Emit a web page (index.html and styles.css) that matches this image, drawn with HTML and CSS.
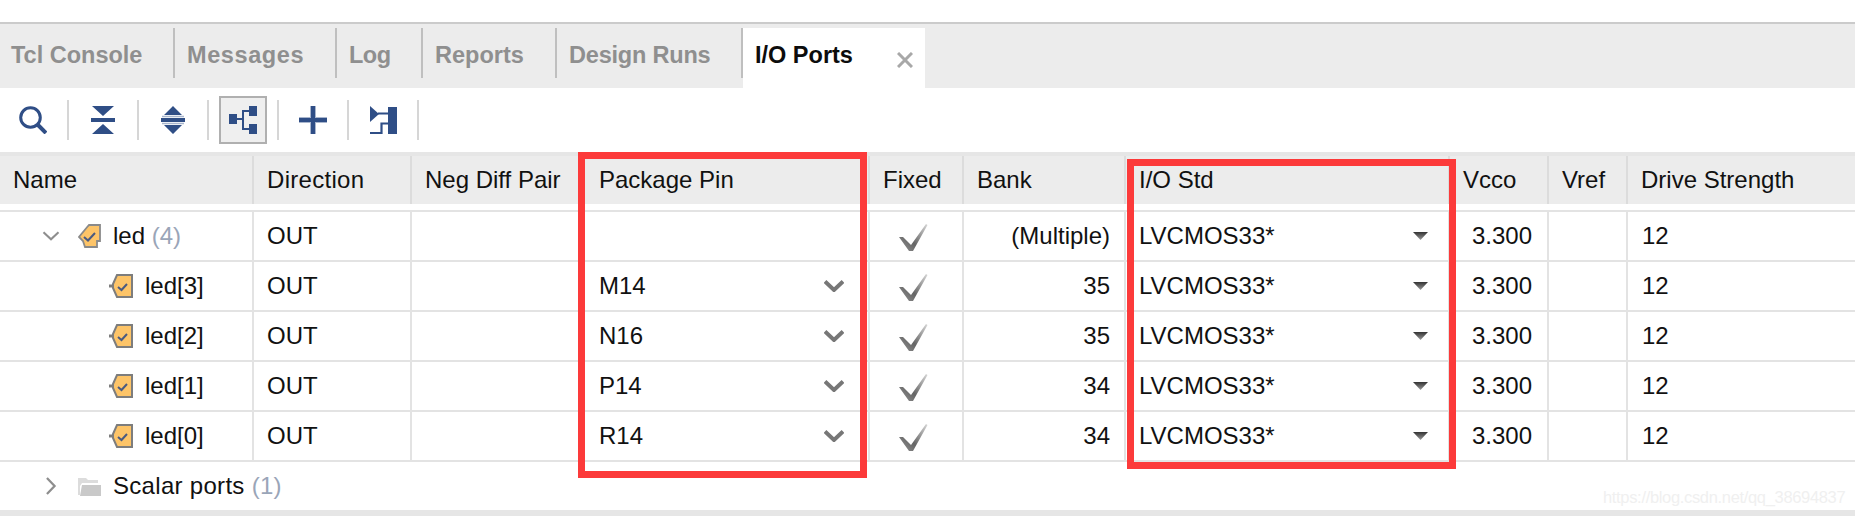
FILE: index.html
```html
<!DOCTYPE html>
<html lang="en">
<head>
<meta charset="utf-8">
<title>I/O Ports</title>
<link rel="stylesheet" href="styles.css">
</head>
<body>
<svg class="defs" width="0" height="0" aria-hidden="true">
  <defs>
    <linearGradient id="tickfill" x1="0" y1="1" x2="1" y2="0">
      <stop offset="0" stop-color="#969696"/>
      <stop offset="0.4" stop-color="#666"/>
      <stop offset="1" stop-color="#d8d8d8"/>
    </linearGradient>
    <linearGradient id="trifill" x1="0" y1="0" x2="0" y2="1">
      <stop offset="0" stop-color="#333"/>
      <stop offset="1" stop-color="#999"/>
    </linearGradient>
  </defs>
  <symbol id="port" viewBox="0 0 24 24">
    <path d="M8 1H23V23H8L4 14V10Z" fill="#fdc468" stroke="#7d7d7d" stroke-width="2"/>
    <path d="M0 10.500H4V13.500H0Z" fill="#7d7d7d"/>
    <path d="M9 13L12.500 16L18 10" fill="none" stroke="#4a5a80" stroke-width="2"/>
  </symbol>
  <symbol id="chev" viewBox="0 0 20 12">
    <path d="M1 1.500L10 10L19 1.500" fill="none" stroke="#777" stroke-width="4"/>
  </symbol>
  <symbol id="tri" viewBox="0 0 15 8">
    <path d="M0 0H15L7.500 8Z" fill="url(#trifill)"/>
  </symbol>
  <symbol id="tick" viewBox="0 0 29 27">
    <path d="M0 13L4 13L12 21L27 0L28.500 1L14 27H10Z" fill="url(#tickfill)"/>
  </symbol>
</svg>

<div class="tabs">
  <div class="tab tab-a">Tcl Console</div>
  <div class="tab tab-b">Messages</div>
  <div class="tab tab-c">Log</div>
  <div class="tab tab-d">Reports</div>
  <div class="tab tab-e">Design Runs</div>
  <div class="tab tab-active">I/O Ports
    <svg class="close" viewBox="0 0 16 16"><path d="M1 1L15 15M15 1L1 15" stroke="#a8a8a8" stroke-width="3"/></svg>
  </div>
</div>

<div class="toolbar">
  <div class="tool"><svg class="ticon" viewBox="0 0 28 28"><circle cx="11.500" cy="11.500" r="9.800" fill="none" stroke="#2f4e86" stroke-width="3"/><path d="M19 19L27 27" stroke="#2f4e86" stroke-width="4"/></svg></div>
  <div class="sep"></div>
  <div class="tool"><svg class="ticon" viewBox="0 0 28 28"><path d="M1 0H23L12 10Z M0 12H24V16H0Z M12 18L23 28H1Z" fill="#2f4e86" transform="translate(2 0)"/></svg></div>
  <div class="sep"></div>
  <div class="tool"><svg class="ticon" viewBox="0 0 28 28"><path d="M14 0L23 9H5Z M14 28L5 19H23Z M2 12H26V16H2Z" fill="#2f4e86"/><path d="M3 10.500H25M3 17.500H25" stroke="#a9b6cd" stroke-width="1.500"/></svg></div>
  <div class="sep"></div>
  <div class="tool"><div class="tool-on"><svg class="ticon" viewBox="0 0 28 28"><path d="M0 8H8V18H0Z M20 0H28V10H20Z M20 18H28V28H20Z" fill="#2f4e86"/><path d="M8 13H14M20 5H14V23H20" fill="none" stroke="#2f4e86" stroke-width="2"/></svg></div></div>
  <div class="sep"></div>
  <div class="tool"><svg class="ticon" viewBox="0 0 28 28"><path d="M11 0H17V28H11Z M0 11H28V17H0Z" fill="#a9b6cd"/><path d="M12 0H16V28H12Z M0 12H28V16H0Z" fill="#2f4e86"/></svg></div>
  <div class="sep"></div>
  <div class="tool"><svg class="ticon" viewBox="0 0 28 28"><path d="M1 0L10 8L1 16Z M19 1H28V28H19Z" fill="#2f4e86"/><path d="M9 7.500H20M20 17.500H12.500V27H1" fill="none" stroke="#2f4e86" stroke-width="2.200"/></svg></div>
  <div class="sep"></div>
</div>

<div class="grid-wrap">
  <div class="row head">
    <div class="cell">Name</div>
    <div class="cell c-dir-h">Direction</div>
    <div class="cell">Neg Diff Pair</div>
    <div class="cell c-pin">Package Pin</div>
    <div class="cell c-fixed-h">Fixed</div>
    <div class="cell">Bank</div>
    <div class="cell c-std-h">I/O Std</div>
    <div class="cell">Vcco</div>
    <div class="cell">Vref</div>
    <div class="cell c-last">Drive Strength</div>
  </div>
  <div class="head-gap"></div>

  <div class="row">
    <div class="cell c-tree">
      <svg class="tw tw-open" viewBox="0 0 20 12"><path d="M1 1.500L10 10L19 1.500" fill="none" stroke="#8e8e8e" stroke-width="2.500"/></svg>
      <svg class="bus" viewBox="0 0 24 24"><path d="M11 1H22V17H19V23H7L5 17L1 13L10 2Z" fill="#fdc468" stroke="#8a8a8a" stroke-width="1.800"/><path d="M6 13L10 16.500L17 9" fill="none" stroke="#4a5a80" stroke-width="2"/></svg>
      <span>led <span class="count">(4)</span></span>
    </div>
    <div class="cell">OUT</div>
    <div class="cell"></div>
    <div class="cell c-pin"></div>
    <div class="cell c-fixed"><svg class="tick"><use href="#tick"/></svg></div>
    <div class="cell c-bank">(Multiple)</div>
    <div class="cell c-std"><span>LVCMOS33*</span><svg class="tri"><use href="#tri"/></svg></div>
    <div class="cell c-vcco">3.300</div>
    <div class="cell"></div>
    <div class="cell c-last">12</div>
  </div>

  <div class="row">
    <div class="cell c-leaf"><svg class="port"><use href="#port"/></svg><span>led[3]</span></div>
    <div class="cell">OUT</div>
    <div class="cell"></div>
    <div class="cell c-pin"><span>M14</span><svg class="chev"><use href="#chev"/></svg></div>
    <div class="cell c-fixed"><svg class="tick"><use href="#tick"/></svg></div>
    <div class="cell c-bank">35</div>
    <div class="cell c-std"><span>LVCMOS33*</span><svg class="tri"><use href="#tri"/></svg></div>
    <div class="cell c-vcco">3.300</div>
    <div class="cell"></div>
    <div class="cell c-last">12</div>
  </div>

  <div class="row">
    <div class="cell c-leaf"><svg class="port"><use href="#port"/></svg><span>led[2]</span></div>
    <div class="cell">OUT</div>
    <div class="cell"></div>
    <div class="cell c-pin"><span>N16</span><svg class="chev"><use href="#chev"/></svg></div>
    <div class="cell c-fixed"><svg class="tick"><use href="#tick"/></svg></div>
    <div class="cell c-bank">35</div>
    <div class="cell c-std"><span>LVCMOS33*</span><svg class="tri"><use href="#tri"/></svg></div>
    <div class="cell c-vcco">3.300</div>
    <div class="cell"></div>
    <div class="cell c-last">12</div>
  </div>

  <div class="row">
    <div class="cell c-leaf"><svg class="port"><use href="#port"/></svg><span>led[1]</span></div>
    <div class="cell">OUT</div>
    <div class="cell"></div>
    <div class="cell c-pin"><span>P14</span><svg class="chev"><use href="#chev"/></svg></div>
    <div class="cell c-fixed"><svg class="tick"><use href="#tick"/></svg></div>
    <div class="cell c-bank">34</div>
    <div class="cell c-std"><span>LVCMOS33*</span><svg class="tri"><use href="#tri"/></svg></div>
    <div class="cell c-vcco">3.300</div>
    <div class="cell"></div>
    <div class="cell c-last">12</div>
  </div>

  <div class="row">
    <div class="cell c-leaf"><svg class="port"><use href="#port"/></svg><span>led[0]</span></div>
    <div class="cell">OUT</div>
    <div class="cell"></div>
    <div class="cell c-pin"><span>R14</span><svg class="chev"><use href="#chev"/></svg></div>
    <div class="cell c-fixed"><svg class="tick"><use href="#tick"/></svg></div>
    <div class="cell c-bank">34</div>
    <div class="cell c-std"><span>LVCMOS33*</span><svg class="tri"><use href="#tri"/></svg></div>
    <div class="cell c-vcco">3.300</div>
    <div class="cell"></div>
    <div class="cell c-last">12</div>
  </div>

  <div class="group">
    <svg class="tw tw-closed" viewBox="0 0 12 20"><path d="M1.500 1L10 10L1.500 19" fill="none" stroke="#8e8e8e" stroke-width="2.500"/></svg>
    <svg class="folder" viewBox="0 0 24 22"><path d="M1 3H9L11 5H21V8H5L3 11V20H1Z" fill="#dcdcdc"/><path d="M5 10H24V21H3Z" fill="#c9c9c9"/></svg>
    <span>Scalar ports <span class="count">(1)</span></span>
  </div>

  <div class="mark mark-pin"></div>
  <div class="mark mark-std"></div>
  <div class="watermark">https://blog.csdn.net/qq_38694837</div>
</div>
</body>
</html>
```

FILE: styles.css
```css
* { box-sizing: border-box; }

html, body { margin: 0; padding: 0; }

body {
  width: 1855px;
  height: 516px;
  overflow: hidden;
  background: #fff;
  color: #111;
  font-family: "Liberation Sans", Arial, sans-serif;
  font-size: 24px;
  padding-top: 22px;
}

.defs { position: absolute; }

/* Tab strip */
.tabs {
  display: flex;
  height: 66px;
  padding-top: 4px;
  background: #ececec;
  border-top: 2px solid #cbcbcb;
  font-size: 23.5px;
  font-weight: bold;
  color: #8f8f8f;
}

.tab {
  height: 50px;
  padding: 5px 0 0 12px;
  line-height: 45px;
  border-right: 2px solid #bfbfbf;
}

.tab-a { width: 175px; padding-left: 11px; }
.tab-b { width: 162px; letter-spacing: 0.6px; }
.tab-c { width: 86px; letter-spacing: -0.5px; }
.tab-d { width: 134px; }
.tab-e { width: 186px; letter-spacing: -0.2px; }

.tab-active {
  display: flex;
  width: 182px;
  height: 60px;
  border-right: 0;
  background: #fff;
  color: #0c0c0c;
  position: relative;
}

.close {
  position: absolute;
  left: 154px;
  top: 24px;
  width: 16px;
  height: 16px;
}

/* Toolbar */
.toolbar {
  display: flex;
  align-items: center;
  height: 64px;
}

.tool {
  display: flex;
  align-items: center;
  justify-content: center;
  width: 66px;
  margin-right: 1px;
}

.tool-on {
  display: flex;
  align-items: center;
  justify-content: center;
  width: 48px;
  height: 48px;
  background: #efefef;
  border: 2px solid #b0b0b0;
}

.ticon { width: 28px; height: 28px; display: block; }

.sep { width: 2px; height: 40px; margin-right: 1px; background: #d6d6d6; }

/* Table */
.grid-wrap { position: relative; }

.row {
  display: grid;
  grid-template-columns: 254px 158px 170px 288px 94px 162px 324px 99px 79px 227px;
  height: 50px;
  border-bottom: 2px solid #e3e3e3;
}

.head {
  height: 52px;
  padding-top: 4px;
  border: 0;
  background: linear-gradient(#e6e6e6 0 4px, #ececec 4px);
}

.head .cell { border-right-color: #dcdcdc; height: 48px; }
.head .c-dir-h { letter-spacing: 0.3px; }

.head-gap { height: 8px; border-bottom: 2px solid #e3e3e3; }

.cell {
  display: flex;
  align-items: center;
  justify-content: space-between;
  height: 48px;
  padding-left: 13px;
  border-right: 2px solid #e3e3e3;
  white-space: nowrap;
}

.c-last { border-right: 0; padding-left: 14px; }
.head .c-last { padding-left: 13px; }

.c-pin { padding-left: 17px; padding-right: 24px; }
.c-fixed-h { padding-left: 13px; }
.c-std-h { padding-left: 13px; }
.c-fixed { justify-content: center; padding: 2px 6px 0 0; }
.c-bank { justify-content: flex-end; padding-right: 14px; }
.c-std { padding-left: 13px; padding-right: 20px; }
.c-vcco { padding-left: 22px; }

.c-tree { justify-content: flex-start; padding-left: 42px; }
.c-leaf { justify-content: flex-start; padding-left: 109px; }

.count { color: #9aa5b8; }

.tw-open { width: 18px; height: 10px; margin-right: 18px; }
.bus { width: 24px; height: 24px; margin-right: 11px; }
.port { width: 24px; height: 24px; margin-right: 12px; }
.chev { width: 20px; height: 12px; }
.tri { width: 15px; height: 8px; }
.tick { width: 29px; height: 27px; }

.group {
  display: flex;
  align-items: center;
  height: 48px;
  padding-left: 45px;
  letter-spacing: 0.3px;
}

.tw-closed { width: 12px; height: 18px; margin-right: 20px; }
.folder { width: 24px; height: 22px; margin-right: 12px; }

/* Annotations painted over the table */
.mark {
  position: absolute;
  border: 7px solid #fc3a3a;
}

.mark-pin { left: 578px; top: 0; width: 289px; height: 326px; }
.mark-std { left: 1127px; top: 7px; width: 329px; height: 310px; }

.watermark {
  position: absolute;
  left: 1603px;
  top: 336px;
  font-size: 16.5px;
  letter-spacing: -0.33px;
  color: #f0f0f0;
  white-space: nowrap;
}

.grid-wrap::after {
  content: "";
  display: block;
  height: 6px;
  background: #e6e6e6;
}
```
